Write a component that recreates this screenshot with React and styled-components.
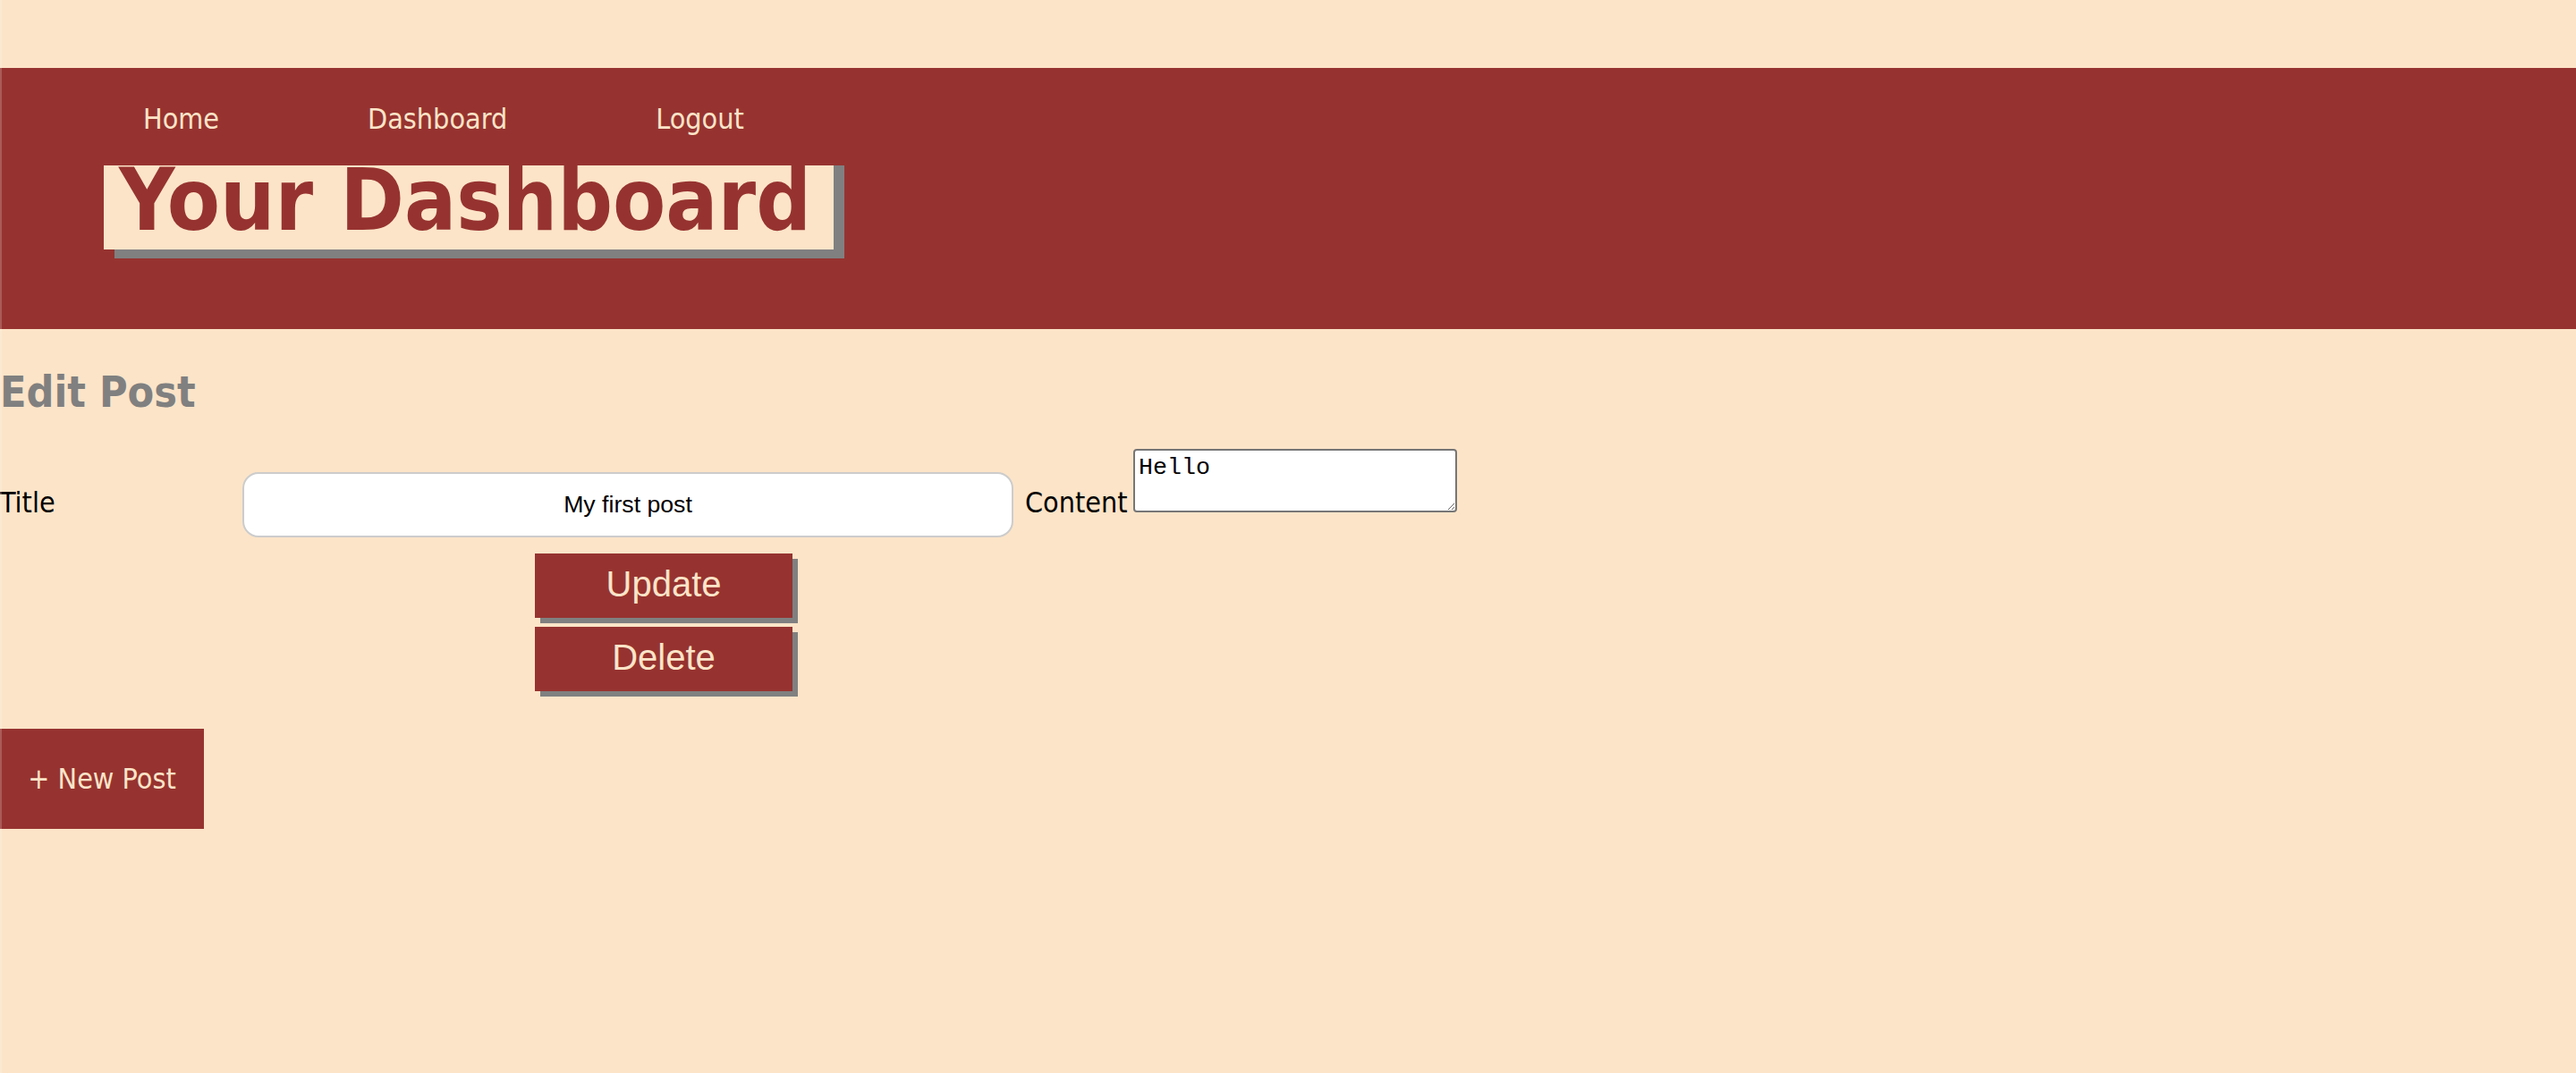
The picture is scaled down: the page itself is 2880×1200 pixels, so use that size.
import styled, { createGlobalStyle } from "styled-components";

const cream = "#fce4c8";
const brick = "#963330";
const shade = "#808080";

const GlobalStyle = createGlobalStyle`
  html, body {
    margin: 0;
    padding: 0;
    background: ${cream};
  }

  body {
    min-height: 100vh;
    font-family: "DejaVu Sans Condensed", "DejaVu Sans", sans-serif;
    color: #000;

    &::after {
      content: "";
      position: fixed;
      top: 0;
      left: 0;
      bottom: 0;
      width: 2px;
      background: rgba(255, 255, 255, 0.2);
      pointer-events: none;
    }
  }
`;

const Page = styled.div`
  padding-top: 76px;
  min-height: 1124px;
`;

const Header = styled.header`
  background: ${brick};
  padding: 38px 0 89px;
`;

const Nav = styled.nav`
  display: flex;
  gap: 166px;
  padding-left: 160px;
  font-size: 32px;
  margin-bottom: 33px;
`;

const NavLink = styled.a`
  color: ${cream};
  text-decoration: none;
`;

const Title = styled.h1`
  display: inline-block;
  margin: 0 0 0 116px;
  padding: 0 25px 16px 17px;
  background: ${cream};
  color: ${brick};
  font-size: 96px;
  font-weight: bold;
  line-height: 78px;
  box-shadow: 12px 0 0 ${shade}, 12px 10px 0 ${shade};
`;

const Main = styled.main`
  padding-top: 42px;
`;

const SectionTitle = styled.h2`
  margin: 0 0 36px;
  color: ${shade};
  font-size: 48px;
  font-weight: bold;
`;

const Row = styled.div`
  font-size: 32px;
`;

const Label = styled.label`
  display: inline-block;
  width: ${(p) => p.$w}px;
  margin-left: ${(p) => p.$ml || 0}px;
`;

const TextInput = styled.input`
  box-sizing: border-box;
  width: 862px;
  height: 73px;
  padding: 0;
  border: 2px solid #cccccc;
  border-radius: 18px;
  background: #fff;
  font-family: "Liberation Sans", Arial, sans-serif;
  font-size: 26.67px;
  text-align: center;
  color: #000;
  outline: none;
`;

const TextArea = styled.textarea`
  box-sizing: border-box;
  width: 362px;
  height: 71px;
  padding: 4px;
  border: 2px solid #767676;
  border-radius: 4px;
  background: #fff;
  font-family: "Liberation Mono", "Courier New", monospace;
  font-size: 26.67px;
  color: #000;
  outline: none;
`;

const Actions = styled.div`
  display: flex;
  flex-direction: column;
  gap: 10px;
  margin: 18px 0 0 598px;
`;

const ActionButton = styled.button`
  width: 288px;
  height: 72px;
  padding: 0 0 4px;
  border: none;
  background: ${brick};
  color: ${cream};
  font-family: "Liberation Sans", Arial, sans-serif;
  font-size: 40px;
  box-shadow: 6px 6px 0 ${shade};
  cursor: pointer;
`;

const NewPost = styled.a`
  display: flex;
  align-items: center;
  justify-content: center;
  width: 228px;
  height: 112px;
  margin-top: 42px;
  background: ${brick};
  color: ${cream};
  font-size: 32px;
  text-decoration: none;
`;

export default function App() {
  return (
    <Page>
      <GlobalStyle />
      <Header>
        <Nav>
          <NavLink href="#">Home</NavLink>
          <NavLink href="#">Dashboard</NavLink>
          <NavLink href="#">Logout</NavLink>
        </Nav>
        <Title>Your Dashboard</Title>
      </Header>
      <Main>
        <SectionTitle>Edit Post</SectionTitle>
        <form onSubmit={(e) => e.preventDefault()}>
          <Row>
            <Label $w={271} htmlFor="title">Title</Label>
            <TextInput id="title" defaultValue="My first post" />
            <Label $w={121} $ml={13} htmlFor="content">Content</Label>
            <TextArea id="content" defaultValue="Hello" />
          </Row>
          <Actions>
            <ActionButton type="submit">Update</ActionButton>
            <ActionButton type="button">Delete</ActionButton>
          </Actions>
        </form>
        <NewPost href="#">+ New Post</NewPost>
      </Main>
    </Page>
  );
}
